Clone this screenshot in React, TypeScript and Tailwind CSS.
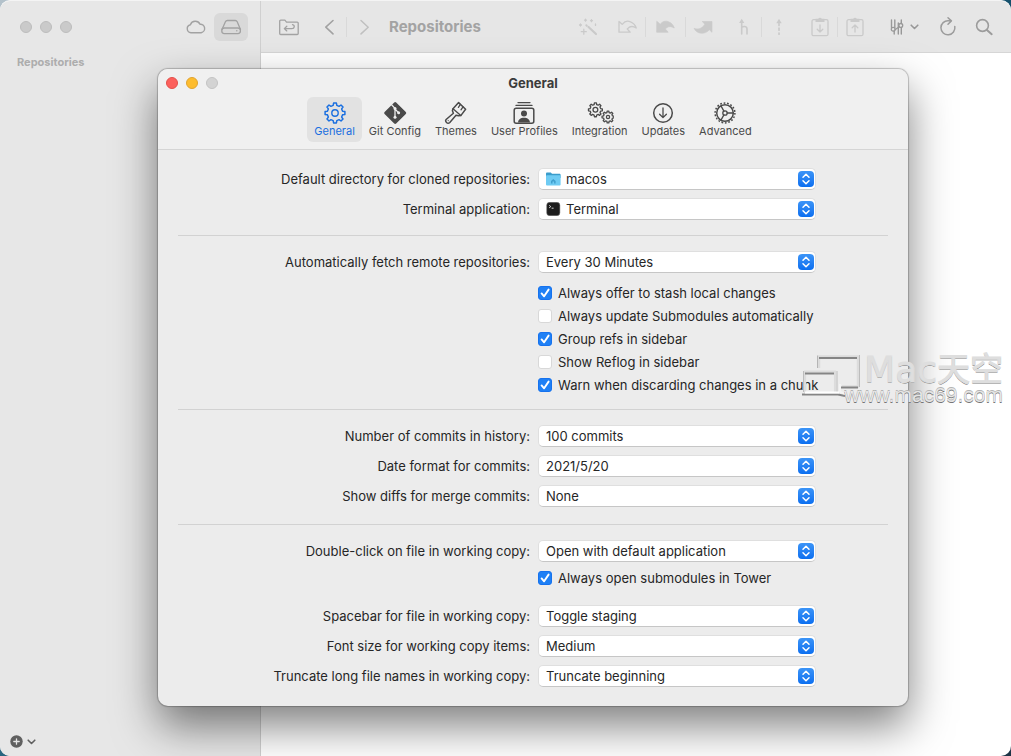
import React, { useId, useState } from "react";

type IconProps = { children: React.ReactNode; className?: string; w?: number; h?: number };

function Icon({ children, className = "", w = 24, h = 24 }: IconProps) {
  return (
    <svg
      width={w}
      height={h}
      viewBox={`0 0 ${w} ${h}`}
      fill="none"
      stroke="currentColor"
      strokeWidth="1.3"
      strokeLinecap="round"
      strokeLinejoin="round"
      aria-hidden="true"
      className={`shrink-0 ${className}`}
    >
      {children}
    </svg>
  );
}

/** Outline of a toothed wheel with `teeth` trapezoid teeth. */
function gearPath(cx: number, cy: number, outer: number, inner: number, teeth: number) {
  const step = (Math.PI * 2) / teeth;
  const points: string[] = [];
  for (let i = 0; i < teeth; i++) {
    const mid = i * step - Math.PI / 2;
    const corners: [number, number][] = [
      [inner, -0.3],
      [outer, -0.18],
      [outer, 0.18],
      [inner, 0.3],
    ];
    for (const [r, f] of corners) {
      const a = mid + f * step;
      points.push(`${(cx + r * Math.cos(a)).toFixed(2)} ${(cy + r * Math.sin(a)).toFixed(2)}`);
    }
  }
  return `M${points.join("L")}Z`;
}

const tabs: { label: string; icon: React.ReactNode }[] = [
  {
    label: "General",
    icon: (
      <Icon>
        <path d={gearPath(12, 12, 10, 7.8, 8)} strokeWidth="1.5" />
        <circle cx="12" cy="12" r="3.2" strokeWidth="1.4" />
      </Icon>
    ),
  },
  {
    label: "Git Config",
    icon: (
      <Icon>
        <rect x="4" y="3.8" width="16.4" height="16.4" rx="1.4" transform="rotate(45 12.2 12)" fill="currentColor" stroke="none" />
        <g className="stroke-[#efefef]" strokeWidth="1.3">
          <path d="M8.6 3.8l3.4 3.6v8.2M12 8l3.4 3.6" />
        </g>
        <g className="fill-[#efefef]" stroke="none">
          <circle cx="12" cy="7.6" r="1.5" />
          <circle cx="15.6" cy="11.8" r="1.5" />
          <circle cx="12" cy="16.2" r="1.5" />
        </g>
      </Icon>
    ),
  },
  {
    label: "Themes",
    icon: (
      <Icon>
        <path d="M14.6 1.6l7 6.6-4.8 6.4-2.2.2-2.6-.6-6.2 7.2a2.3 2.3 0 0 1-3.4-3.2l7-6-1-2.4.6-2z" strokeWidth="1.5" />
        <path d="M9 7.8l7.8 6.8M16.4 3.4l-2 3M19 5.8l-2 3" />
        <circle cx="4.2" cy="19.6" r=".6" fill="currentColor" stroke="none" />
      </Icon>
    ),
  },
  {
    label: "User Profiles",
    icon: (
      <Icon>
        <path d="M6 1.6h12M4 4.4h16" />
        <rect x="2.2" y="7.2" width="19.6" height="15" rx="2" strokeWidth="1.5" />
        <circle cx="12" cy="12.6" r="3" fill="currentColor" stroke="none" />
        <path d="M6 21.6c.4-3.4 2.8-4.8 6-4.8s5.6 1.4 6 4.8z" fill="currentColor" stroke="none" />
      </Icon>
    ),
  },
  {
    label: "Integration",
    icon: (
      <Icon w={28}>
        <path d={gearPath(9.4, 8.8, 7, 5.4, 8)} />
        <circle cx="9.4" cy="8.8" r="2.4" />
        <path d={gearPath(22, 16, 6, 4.6, 8)} />
        <circle cx="22" cy="16" r="1.6" />
      </Icon>
    ),
  },
  {
    label: "Updates",
    icon: (
      <Icon>
        <circle cx="12" cy="12" r="9.3" strokeWidth="1.5" />
        <path d="M12 7v9.4M8.6 13.2l3.4 3.4 3.4-3.4" />
      </Icon>
    ),
  },
  {
    label: "Advanced",
    icon: (
      <Icon>
        <circle cx="12" cy="12" r="8.3" strokeWidth="1.5" />
        <circle cx="12" cy="12" r="9.9" strokeWidth="1.5" strokeDasharray="1.73 1.73" strokeLinecap="butt" />
        <circle cx="12" cy="12" r="2.2" />
        <path d="M14.2 12h6M10.9 10.1L8 4.9M10.9 13.9L8 19.1" />
      </Icon>
    ),
  },
];

function Chevron({ className = "" }: { className?: string }) {
  return (
    <Icon w={9} h={6} className={className}>
      <path d="M1.2 1.2l3.3 3.3 3.3-3.3" strokeWidth="1.6" />
    </Icon>
  );
}

function ToolButton({ label, children, className = "w-6" }: { label: string; children: React.ReactNode; className?: string }) {
  return (
    <button type="button" aria-label={label} className={`flex h-7 items-center justify-center ${className}`}>
      {children}
    </button>
  );
}

function Divider() {
  return <span className="h-5 w-px bg-[#d9d9d9]" />;
}

function Light({ className }: { className: string }) {
  return <span className={`size-3 rounded-full border ${className}`} />;
}

function PopUp({ label, options, icon }: { label: string; options: string[]; icon?: React.ReactNode }) {
  const id = useId();
  return (
    <>
      <label htmlFor={id} className="text-right">
        {label}
      </label>
      <div className="relative">
        <select
          id={id}
          className={`block h-[22px] w-full appearance-none rounded-[5px] border border-[#dfdfdf] border-b-[#c6c6c6] bg-white pr-7 leading-5 text-[#262626] ${
            icon ? "pl-[27px]" : "pl-[7px]"
          }`}
        >
          {options.map((o) => (
            <option key={o}>{o}</option>
          ))}
        </select>
        {icon && <span className="pointer-events-none absolute left-2 top-1">{icon}</span>}
        <span className="pointer-events-none absolute right-[2px] top-[3px] flex size-4 items-center justify-center rounded-[4px] bg-linear-to-b from-[#3b94f7] to-[#0a6ff0] text-white">
          <Icon w={16} h={16}>
            <path d="M5 6.3l3-3 3 3M5 9.7l3 3 3-3" strokeWidth="1.5" />
          </Icon>
        </span>
      </div>
    </>
  );
}

function Tick({ label, on = false }: { label: string; on?: boolean }) {
  const [checked, setChecked] = useState(on);
  return (
    <label className="col-start-2 flex h-[23px] items-center gap-[6px] whitespace-nowrap">
      <span className="relative flex size-[14px]">
        <input
          type="checkbox"
          checked={checked}
          onChange={(e) => setChecked(e.target.checked)}
          className="size-[14px] appearance-none rounded-[3px] border border-[#d8d8d8] bg-white checked:border-[#1672ee] checked:bg-[#1f80f5]"
        />
        {checked && (
          <Icon w={14} h={14} className="pointer-events-none absolute inset-0 text-white">
            <path d="M3.6 7.4l2.5 2.9 4.5-6.7" strokeWidth="1.9" />
          </Icon>
        )}
      </span>
      {label}
    </label>
  );
}

function Rows({ children }: { children: React.ReactNode }) {
  return <div className="grid grid-cols-[minmax(0,1fr)_278px] items-center gap-x-2 gap-y-2 pr-[72px]">{children}</div>;
}

function Ticks({ children, className = "" }: { children: React.ReactNode; className?: string }) {
  return <div className={`grid grid-cols-[minmax(0,1fr)_278px] gap-x-2 pr-[72px] ${className}`}>{children}</div>;
}

function FolderIcon() {
  return (
    <svg width="15" height="14" viewBox="0 0 15 14" aria-hidden="true">
      <path d="M0 1.8C0 1 .5.6 1.2.6h3.6l1.2 1.2h7.4c.8 0 1.2.4 1.2 1.2V6H0z" fill="#3a9ccb" />
      <rect x="0" y="3.2" width="14.6" height="10.4" rx="1" fill="#6ecbf3" />
      <path d="M5 9l2.3-2L9.6 9v2.4H8.1V9.6H6.5v1.8H5z" fill="#3f9fce" />
    </svg>
  );
}

function TerminalIcon() {
  return (
    <svg width="15" height="14" viewBox="0 0 15 14" aria-hidden="true">
      <rect x=".7" y=".3" width="13.2" height="13.4" rx="3" fill="#1d1d1d" stroke="#777" strokeWidth=".5" />
      <path d="M3.2 3.4l1.6 1.2-1.6 1.2M5.6 6.2h2" fill="none" stroke="#fff" strokeWidth=".8" />
    </svg>
  );
}

function Preferences() {
  const [active, setActive] = useState("General");
  return (
    <section
      aria-label="General"
      className="absolute left-[158px] right-[103px] top-[69px] overflow-hidden rounded-[10px] bg-[#ececec] text-[13px] leading-4 text-[#262626] shadow-[0_0_1px_1px_rgba(0,0,0,0.22),0_20px_44px_rgba(0,0,0,0.5)]"
    >
      <header className="border-b border-[#d5d5d5] bg-[#f0f0f0] pb-[7px]">
        <div className="grid h-7 grid-cols-[1fr_auto_1fr] items-center px-2">
          <div className="flex gap-2">
            <Light className="border-[#e2504a] bg-[#fc605c]" />
            <Light className="border-[#e0a330] bg-[#fdbc2e]" />
            <Light className="border-[#c3c3c3] bg-[#d3d3d3]" />
          </div>
          <h1 className="font-bold text-[#3b3b3b]">General</h1>
        </div>
        <nav className="flex justify-center">
          {tabs.map((t) => (
            <button
              key={t.label}
              type="button"
              onClick={() => setActive(t.label)}
              className={`flex flex-col items-center rounded-[6px] px-[7px] pb-1 pt-1 text-[11px] leading-[13px] ${
                active === t.label ? "bg-[#e2e2e2] text-[#1a6fe0]" : "text-[#4a4a4a]"
              }`}
            >
              {t.icon}
              {t.label}
            </button>
          ))}
        </nav>
      </header>

      <form className="px-5 pb-[19px] pt-[18px]">
        <Rows>
          <PopUp label="Default directory for cloned repositories:" options={["macos"]} icon={<FolderIcon />} />
          <PopUp label="Terminal application:" options={["Terminal"]} icon={<TerminalIcon />} />
        </Rows>
        <hr className="my-[15px] border-[#d2d2d2]" />
        <Rows>
          <PopUp label="Automatically fetch remote repositories:" options={["Every 30 Minutes"]} />
        </Rows>
        <Ticks className="pt-2">
          <Tick label="Always offer to stash local changes" on />
          <Tick label="Always update Submodules automatically" />
          <Tick label="Group refs in sidebar" on />
          <Tick label="Show Reflog in sidebar" />
          <Tick label="Warn when discarding changes in a chunk" on />
        </Ticks>
        <hr className="mb-[15px] mt-[13px] border-[#d2d2d2]" />
        <Rows>
          <PopUp label="Number of commits in history:" options={["100 commits"]} />
          <PopUp label="Date format for commits:" options={["2021/5/20"]} />
          <PopUp label="Show diffs for merge commits:" options={["None"]} />
        </Rows>
        <hr className="mb-[15px] mt-[17px] border-[#d2d2d2]" />
        <Rows>
          <PopUp label="Double-click on file in working copy:" options={["Open with default application"]} />
        </Rows>
        <Ticks className="pb-4 pt-1">
          <Tick label="Always open submodules in Tower" on />
        </Ticks>
        <Rows>
          <PopUp label="Spacebar for file in working copy:" options={["Toggle staging"]} />
          <PopUp label="Font size for working copy items:" options={["Medium"]} />
          <PopUp label="Truncate long file names in working copy:" options={["Truncate beginning"]} />
        </Rows>
      </form>
    </section>
  );
}

function Toolbar() {
  const curve = "M3 6.5l3.2 2.8C8.5 6.4 11.5 5.500 14.500 6.800c3 1.200 5 3.400 5.700 6.200-2.400-1.600-5-2-7.200-.6l-1.800 1.500 3 3.300H3z";
  return (
    <header className="flex h-[52px] items-center border-b border-[#d6d6d6] bg-[#e6e6e6] pl-4 pr-[15px] text-[#a2a2a2]">
      <ToolButton label="Open repository">
        <Icon>
          <path d="M2.700 18.500V6.200a1 1 0 0 1 1-1h4.200l1.600 1.900h10.700a1 1 0 0 1 1 1v10.400a1 1 0 0 1-1 1H3.700a1 1 0 0 1-1-1z" />
          <path d="M15.500 9.600c2.600.6 2.200 4-.6 4H7.500m2.300-2.400l-2.500 2.400 2.500 2.300" />
        </Icon>
      </ToolButton>
      <div className="ml-4 flex items-center gap-[5px]">
        <ToolButton label="Back">
          <Icon>
            <path d="M16 5.500L8.800 12.200l7.200 6.700" strokeWidth="1.600" />
          </Icon>
        </ToolButton>
        <Divider />
        <ToolButton label="Forward" className="w-6 text-[#c0c0c0]">
          <Icon>
            <path d="M9 5.500l7.200 6.700L9 18.900" strokeWidth="1.500" />
          </Icon>
        </ToolButton>
      </div>
      <h2 className="ml-[13px] text-[15px] font-bold leading-5 text-[#a3a3a3]">Repositories</h2>

      <div className="ml-auto flex items-center gap-[17px] text-[#cacaca]">
        <ToolButton label="Quick actions" className="w-5">
          <Icon>
            <path d="M11.500 12l7.500 7" strokeWidth="2.200" />
            <path d="M8.500 4.200v2M7.500 5.200h2M14.500 4.700v2M13.500 5.700h2M3.500 9v2M2.500 10h2M18.500 9v1.400M6.800 14.200v5M4.300 16.700h5" strokeWidth="1.300" />
            <path d="M9.300 10.200l.5.500" strokeWidth="2" />
          </Icon>
        </ToolButton>
        <div className="flex items-center gap-[5px]">
          <ToolButton label="Fetch">
            <Icon>
              <path d={curve} />
            </Icon>
          </ToolButton>
          <Divider />
          <ToolButton label="Pull" className="w-[29px]">
            <Icon>
              <path d={curve} fill="currentColor" strokeWidth=".8" />
            </Icon>
          </ToolButton>
          <Divider />
          <ToolButton label="Push">
            <Icon>
              <path d="M11.500 6.500H21v10.800l-2.700-2.500c-4 5-12.500 4.700-15.300-1.500 3.700 1.400 7.500.7 10.800-3.800z" fill="currentColor" strokeWidth=".6" />
            </Icon>
          </ToolButton>
        </div>
        <div className="flex items-center gap-[5px]">
          <ToolButton label="Merge">
            <Icon>
              <path d="M9.700 19V6M9.700 12.500c1.500-1.600 5.300-1.500 5.300 1.500v5" strokeWidth="1.600" />
              <path d="M9.700 3.800l2.600 4.200H7.100z" fill="currentColor" stroke="none" />
            </Icon>
          </ToolButton>
          <Divider />
          <ToolButton label="Rebase">
            <Icon>
              <path d="M12 8.500v2M12 13.200v2M12 18v1.200" strokeWidth="1.700" />
              <path d="M12 3.800l2.700 4.400H9.300z" fill="currentColor" stroke="none" />
            </Icon>
          </ToolButton>
        </div>
        <div className="mr-[5px] flex items-center gap-[5px]">
          <ToolButton label="Save stash">
            <Icon>
              <rect x="4" y="4.700" width="16" height="16" rx="1.500" />
              <path d="M7.500 3.800h2.700a2 2 0 0 1 3.600 0h2.700V7h-9z" fill="currentColor" stroke="none" />
              <path d="M12 10v7M9.200 14.200L12 17l2.800-2.800" />
            </Icon>
          </ToolButton>
          <Divider />
          <ToolButton label="Apply stash">
            <Icon>
              <rect x="4" y="4.700" width="16" height="16" rx="1.500" />
              <path d="M7.500 3.800h2.700a2 2 0 0 1 3.600 0h2.700V7h-9z" fill="currentColor" stroke="none" />
              <path d="M12 17v-7M9.200 12.800L12 10l2.800 2.800" />
            </Icon>
          </ToolButton>
        </div>
        <ToolButton label="Git flow" className="gap-[6px] text-[#989898]">
          <Icon w={15} h={20}>
            <path d="M2.500 3v7.500M5.800 3v7.800M5.200 14v3M9.300 6v11M12.300 3v3.500M12.300 10.500V17" strokeWidth="1.400" />
            <circle cx="4.200" cy="12.300" r="1.900" />
            <circle cx="11.800" cy="8.400" r="1.900" />
            <path d="M6 12.800l4.200-3" />
          </Icon>
          <Chevron />
        </ToolButton>
        <div className="flex gap-3 text-[#9c9c9c]">
          <ToolButton label="Refresh">
            <Icon>
              <path d="M18.800 11.500a7 7 0 1 1-6.300-5.700h2.700M12 2.700l3.400 3.200L12 9.200" strokeWidth="1.500" />
            </Icon>
          </ToolButton>
          <ToolButton label="Search">
            <Icon>
              <circle cx="10.500" cy="10.500" r="5.900" strokeWidth="1.600" />
              <path d="M14.900 14.900l4.800 4.300" strokeWidth="2" />
            </Icon>
          </ToolButton>
        </div>
      </div>
    </header>
  );
}

function Sidebar() {
  return (
    <aside className="flex w-[261px] shrink-0 flex-col border-r border-[#d0d0d0] bg-[#e7e7e7]">
      <div className="flex h-[51px] items-center pl-5 pr-3">
        <div className="flex gap-2">
          <Light className="border-[#bdbdbd] bg-[#cacaca]" />
          <Light className="border-[#bdbdbd] bg-[#cacaca]" />
          <Light className="border-[#bdbdbd] bg-[#cacaca]" />
        </div>
        <div className="ml-auto flex items-center gap-[6px] text-[#a2a2a2]">
          <ToolButton label="Services">
            <Icon>
              <path d="M7 17.700a4 4 0 0 1-.6-7.900A5.200 5.200 0 0 1 16 9.200a4.300 4.300 0 0 1 1.200 8.500z" strokeWidth="1.400" />
            </Icon>
          </ToolButton>
          <ToolButton label="Local repositories" className="w-[34px] rounded-[6px] bg-[#d9d9d9]">
            <Icon>
              <path d="M3 14.500L6.400 6.700c.4-.8 1-1.200 1.900-1.200h8c.9 0 1.500.4 1.900 1.200l3.300 7.800" />
              <rect x="2.800" y="13" width="18.600" height="5.600" rx="2.500" />
              <circle cx="17.800" cy="15.800" r=".7" fill="currentColor" stroke="none" />
            </Icon>
          </ToolButton>
        </div>
      </div>
      <h3 className="mt-[2px] pl-[17px] text-[11px] font-bold leading-4 text-[#adadad]">Repositories</h3>
      <button type="button" aria-label="Add" className="mb-2 ml-[10px] mt-auto flex w-fit items-center gap-1 text-[#606060]">
        <Icon w={13} h={13}>
          <circle cx="6.500" cy="6.500" r="6.200" fill="currentColor" stroke="none" />
          <path d="M6.500 3.800v5.400M3.800 6.500h5.400" className="stroke-[#e7e7e7]" />
        </Icon>
        <Chevron />
      </button>
    </aside>
  );
}

function Watermark() {
  return (
    <div className="pointer-events-none absolute right-2 top-[354px] flex items-start">
      <svg width="62" height="46" viewBox="0 0 62 46" fill="none" aria-hidden="true">
        <path d="M17 14V2.500h39v30H40" stroke="#dcdcdc" strokeWidth="2.500" />
        <path d="M15.500 14V1.500" stroke="#b5b5b5" strokeWidth="1" />
        <path d="M17 4h38M38 33.500h18" stroke="#858585" strokeWidth="1.800" />
        <path d="M57.500 1v32" stroke="#bcbcbc" strokeWidth="1" />
        <path d="M3 39V17.500h30V39" stroke="#dcdcdc" strokeWidth="2.200" />
        <path d="M1.500 38V17M35 17v21" stroke="#bcbcbc" strokeWidth="1" />
        <path d="M3 19.500h29M0 40.500h36l7 1.500" stroke="#858585" strokeWidth="1.800" />
        <path d="M3 38.500h34" stroke="#fff" strokeWidth="2" />
        <path d="M38 30v8l6 2" stroke="#f4f4f4" strokeWidth="2" />
      </svg>
      <div className="-ml-5 flex flex-col items-end">
        <span className="flex items-center font-['DejaVu_Sans','Noto_Sans_CJK_SC',sans-serif] text-[36px] leading-8 text-[#dedede] [-webkit-text-stroke:1px_#dedede] [text-shadow:0_1px_0_#7c7c7c]">
          Mac<span className="text-[33px]">天空</span>
        </span>
        <span className="font-['Liberation_Sans',sans-serif] text-[21px] leading-[18px] text-[#e6e6e6] [text-shadow:0_1px_0_#767676,0_-1px_0_#b4b4b4]">
          www.mac69.com
        </span>
      </div>
    </div>
  );
}

export default function App() {
  return (
    <div className="relative flex h-screen min-h-[740px] flex-col overflow-hidden bg-[linear-gradient(135deg,#b4c2cb_0%,#135573_50%,#1d3446_100%)] font-['Inter','Noto_Sans_CJK_SC',sans-serif]">
      <div className="flex min-h-0 flex-1 overflow-hidden rounded-[10px] border-t border-[#f4f4f4] bg-white">
        <Sidebar />
        <main className="flex min-w-0 flex-1 flex-col">
          <Toolbar />
        </main>
      </div>
      <Preferences />
      <Watermark />
    </div>
  );
}
